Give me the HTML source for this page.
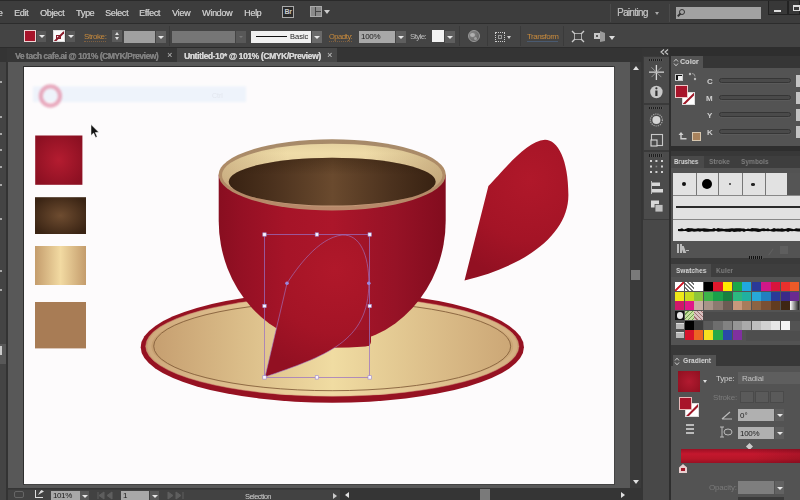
<!DOCTYPE html>
<html><head><meta charset="utf-8">
<style>
*{margin:0;padding:0;box-sizing:border-box;-webkit-font-smoothing:antialiased}
html,body{width:800px;height:500px;overflow:hidden;background:#353535;font-family:"Liberation Sans",sans-serif}
.a{position:absolute}
span,.t,.tx,.lbl,.wl{will-change:transform}
.t{position:absolute;white-space:nowrap;line-height:10px;text-shadow:0.25px 0 0 currentColor}
#menu{left:0;top:0;width:800px;height:23.5px;background:#3d3d3d;border-top:1px solid #2a2a2a;border-bottom:1px solid #2c2c2c}
#menu .t{top:7px;font-size:9px;color:#c4c4c4;letter-spacing:-0.3px}
#ctrl{left:0;top:23.5px;width:800px;height:24px;background:#444444;border-bottom:1px solid #2c2c2c}
.btn{position:absolute;background:#575757}
.btn:after{content:"";position:absolute;left:50%;top:50%;margin-left:-3px;margin-top:-1px;border-left:3px solid transparent;border-right:3px solid transparent;border-top:3px solid #e8e8e8}
.lbl{position:absolute;font-size:8px;color:#c88a3c;letter-spacing:-0.2px;line-height:9px}
.wl{position:absolute;font-size:8px;color:#c8c8c8;letter-spacing:-0.2px;line-height:9px}
#tabs{left:0;top:47.5px;width:642px;height:14.5px;background:#343434}
#canvas{left:8px;top:62px;width:622px;height:426px;background:#585858}
#artboard{left:24px;top:67px;width:590px;height:417px;background:#fdfbfc;box-shadow:-1px -1px 0 0 #2e2e2e,1px 1px 0 0 #444,1px -1px 0 0 #3a3a3a,-1px 1px 0 0 #3a3a3a}
#lstrip{left:0;top:62px;width:7px;height:438px;background:#434343}
#status{left:0;top:488.5px;width:630px;height:11.5px;background:#424242;border-top:1px solid #3a3a3a}
#vscroll{left:630px;top:62px;width:11px;height:426px;background:#3a3a3a}
#tools{left:643px;top:62px;width:26px;height:438px;background:#484848}
#panels{left:669px;top:47px;width:131px;height:453px;background:#2e2e2e}
.ph{position:absolute;left:671px;width:129px;height:12px;background:#363636}
.ptab{position:absolute;height:12px;background:#535353;font-size:8.5px;font-weight:bold;color:#d8d8d8;line-height:12px;padding-left:3px;letter-spacing:-0.2px}
.ptab2{position:absolute;height:12px;font-size:8.5px;font-weight:bold;color:#8a8a8a;line-height:12px;letter-spacing:-0.2px}
.pb{position:absolute;left:671px;width:129px;background:#535353}
.tx{position:absolute;white-space:nowrap;font-size:8px;font-weight:bold;line-height:10px;transform-origin:0 50%;transform:scaleX(0.82)}
.sw{position:absolute;width:9.5px;height:9.5px}
</style></head><body><div id="root" style="position:absolute;left:0;top:0;width:800px;height:500px;overflow:hidden">
<div class="a" id="menu">
 <span class="t" style="left:-4px">le</span>
 <span class="t" style="left:14px">Edit</span>
 <span class="t" style="left:40px">Object</span>
 <span class="t" style="left:76px">Type</span>
 <span class="t" style="left:105px">Select</span>
 <span class="t" style="left:139px">Effect</span>
 <span class="t" style="left:172px">View</span>
 <span class="t" style="left:202px">Window</span>
 <span class="t" style="left:244px">Help</span>
 <div class="a" style="left:282px;top:5px;width:12px;height:12px;border:1px solid #aaa;background:#2a2a2a;font-size:7px;font-weight:bold;color:#ccc;line-height:10px;text-align:center;letter-spacing:-0.5px">Br</div>
 <div class="a" style="left:310px;top:5px;width:12px;height:11px;background:#8a8a8a;border:1px solid #aaa"></div>
 <div class="a" style="left:315px;top:6px;width:1px;height:9px;background:#444"></div>
 <div class="a" style="left:316px;top:10px;width:5px;height:1px;background:#444"></div>
 <div class="a" style="left:324px;top:9px;border-left:3px solid transparent;border-right:3px solid transparent;border-top:4px solid #ccc"></div>
 <div class="a" style="left:610px;top:3px;width:1px;height:18px;background:#4a4a4a"></div>
 <span class="t" style="left:617px;top:7px;font-size:10px;color:#b8b8b8;letter-spacing:-0.7px">Painting</span>
 <div class="a" style="left:655px;top:11px;border-left:2px solid transparent;border-right:2px solid transparent;border-top:3px solid #aaa"></div>
 <div class="a" style="left:669px;top:3px;width:1px;height:18px;background:#4a4a4a"></div>
 <div class="a" style="left:676px;top:6px;width:85px;height:12px;background:#a2a2a2"></div>
 <div class="a" style="left:679px;top:8px;width:6px;height:6px;border:1px solid #333;border-radius:50%"></div>
 <div class="a" style="left:677px;top:13px;width:4px;height:1.5px;background:#333;transform:rotate(-45deg)"></div>
 <div class="a" style="left:768px;top:0px;width:20px;height:14px;background:#383838;border:1px solid #222;border-top:none"></div>
 <div class="a" style="left:774px;top:8.5px;width:7px;height:2px;background:#ddd"></div>
 <div class="a" style="left:788px;top:0px;width:12px;height:14px;background:#383838;border:1px solid #222;border-top:none"></div>
 <div class="a" style="left:793px;top:4px;width:7px;height:6px;border:1px solid #ddd;border-top-width:2px"></div>
</div>

<div class="a" id="ctrl">
 <div class="a" style="left:24px;top:6.5px;width:12px;height:12px;background:#a8142a;border:1px solid #f0d4d4"></div>
 <div class="btn" style="left:37px;top:7px;width:9px;height:11px"></div>
 <div class="a" style="left:53px;top:6.5px;width:12px;height:12px;background:#fafafa;border:1px solid #ddd;overflow:hidden">
   <div class="a" style="left:-2px;top:4.5px;width:14px;height:1.5px;background:#8a1a2a;transform:rotate(-45deg)"></div>
   <div class="a" style="left:2px;top:4px;width:5px;height:4px;border:1px solid #8a1a2a"></div>
 </div>
 <div class="btn" style="left:66px;top:7px;width:9px;height:11px"></div>
 <span class="lbl" style="left:84px;top:8px;border-bottom:1px dotted #806040;letter-spacing:-0.41px">Stroke:</span>
 <div class="a" style="left:112px;top:6.5px;width:10px;height:12px;background:#5a5a5a"></div>
 <div class="a" style="left:114.5px;top:8px;border-left:2.5px solid transparent;border-right:2.5px solid transparent;border-bottom:3px solid #ddd"></div>
 <div class="a" style="left:114.5px;top:13.5px;border-left:2.5px solid transparent;border-right:2.5px solid transparent;border-top:3px solid #ddd"></div>
 <div class="a" style="left:124px;top:7px;width:31px;height:12px;background:#a0a0a0"></div>
 <div class="btn" style="left:156px;top:7px;width:10px;height:12px;background:#606060"></div>
 <div class="a" style="left:169px;top:2px;width:1px;height:20px;background:#3a3a3a"></div>
 <div class="a" style="left:172px;top:7px;width:63px;height:12px;background:#767676"></div>
 <div class="a" style="left:236px;top:7px;width:10px;height:12px;background:#585858"></div>
 <div class="a" style="left:239px;top:12px;border-left:2px solid transparent;border-right:2px solid transparent;border-top:2px solid #777"></div>
 <div class="a" style="left:251px;top:7px;width:60px;height:12px;background:#f0f0f0"></div>
 <div class="a" style="left:256px;top:12px;width:31px;height:1.5px;background:#111"></div>
 <span class="a" style="left:290px;top:8.5px;font-size:7.5px;color:#222;line-height:9px">Basic</span>
 <div class="btn" style="left:312px;top:7px;width:10px;height:12px;background:#6a6a6a"></div>
 <span class="lbl" style="left:329px;top:8px;font-size:7.5px;letter-spacing:-0.55px;border-bottom:1px dotted #806040">Opacity:</span>
 <div class="a" style="left:359px;top:7px;width:36px;height:12px;background:#a8a8a8"></div>
 <span class="a" style="left:361px;top:8.5px;font-size:8px;color:#222;line-height:9px;letter-spacing:-0.3px">100%</span>
 <div class="btn" style="left:396px;top:7px;width:10px;height:12px;background:#5e5e5e"></div>
 <span class="wl" style="left:410px;top:8px;color:#bdbdbd;letter-spacing:-0.67px">Style:</span>
 <div class="a" style="left:432px;top:6.5px;width:12px;height:12px;background:#f2f2f2"></div>
 <div class="btn" style="left:445px;top:7px;width:10px;height:12px;background:#5e5e5e"></div>
 <div class="a" style="left:459px;top:2px;width:1px;height:20px;background:#3a3a3a"></div>
 <div class="a" style="left:467.5px;top:6.5px;width:12px;height:12px;border-radius:50%;background:radial-gradient(circle at 35% 35%,#8a8a8a,#5a5a5a);border:1px solid #9a9a9a"></div><div class="a" style="left:470px;top:9px;width:5px;height:4px;border-radius:50%;background:#b0b0b0"></div><div class="a" style="left:474px;top:13px;width:3px;height:3px;border-radius:50%;background:#a0a0a0"></div>
 <div class="a" style="left:487px;top:2px;width:1px;height:20px;background:#3a3a3a"></div>
 <div class="a" style="left:495px;top:8px;width:10px;height:10px;border:1px dotted #ccc"></div>
 <div class="a" style="left:498px;top:11px;width:4px;height:4px;border:1px solid #999"></div>
 <div class="a" style="left:507px;top:12px;border-left:2.5px solid transparent;border-right:2.5px solid transparent;border-top:3px solid #ccc"></div>
 <div class="a" style="left:520px;top:2px;width:1px;height:20px;background:#3a3a3a"></div>
 <span class="lbl" style="left:527px;top:8px;border-bottom:1px solid #4a5a70;letter-spacing:-0.52px">Transform</span>
 <div class="a" style="left:563px;top:2px;width:1px;height:20px;background:#3a3a3a"></div>
 <svg class="a" style="left:571px;top:6px" width="14" height="13"><rect x="3.5" y="3.5" width="7" height="6" fill="none" stroke="#aaa" stroke-width="1"/><path d="M1,1 L4,4 M13,1 L10,4 M1,12 L4,9 M13,12 L10,9" stroke="#ccc" stroke-width="1.4"/></svg>
 <svg class="a" style="left:593px;top:6px" width="14" height="13"><rect x="1" y="3" width="6" height="6" fill="#c8c8c8"/><path d="M7,1 L12,3 L12,11 L7,12 Z" fill="#9a9a9a"/><rect x="3" y="5" width="2" height="2" fill="#555"/></svg>
 <div class="a" style="left:609px;top:12px;border-left:3px solid transparent;border-right:3px solid transparent;border-top:4px solid #ddd"></div>
</div>

<div class="a" id="tabs">
 <div class="a" style="left:7px;top:0;width:170px;height:15px;background:#363636"></div>
 <span class="t" style="left:15px;top:3px;font-size:8.5px;font-weight:bold;color:#808080;letter-spacing:-0.48px">Ve tach cafe.ai @ 101% (CMYK/Preview)</span>
 <span class="t" style="left:167px;top:2px;font-size:9px;color:#9a9a9a">×</span>
 <div class="a" style="left:177px;top:0;width:160px;height:15px;background:#474747"></div>
 <span class="t" style="left:183.5px;top:3px;font-size:8.5px;font-weight:bold;color:#d4d4d4;letter-spacing:-0.38px">Untitled-10* @ 101% (CMYK/Preview)</span>
 <span class="t" style="left:327px;top:2px;font-size:9px;color:#a8a8a8">×</span>
</div>

<div class="a" id="canvas"></div>
<div class="a" id="artboard"></div>
<div class="a" id="status"></div>
<div class="a" style="left:0px;top:62px;width:7px;height:438px;background:#444"></div>
<div class="a" style="left:6px;top:62px;width:2px;height:438px;background:#333"></div>
<div class="a" style="left:0px;top:81px;width:2px;height:1.5px;background:#a8a8a8"></div>
<div class="a" style="left:0px;top:116px;width:2px;height:1.5px;background:#a8a8a8"></div>
<div class="a" style="left:0px;top:133px;width:2px;height:1.5px;background:#a8a8a8"></div>
<div class="a" style="left:0px;top:149px;width:2px;height:1.5px;background:#a8a8a8"></div>
<div class="a" style="left:0px;top:166px;width:2px;height:1.5px;background:#a8a8a8"></div>
<div class="a" style="left:0px;top:184px;width:2px;height:1.5px;background:#a8a8a8"></div>
<div class="a" style="left:0px;top:218px;width:2px;height:1.5px;background:#a8a8a8"></div>
<div class="a" style="left:0px;top:270px;width:2px;height:1.5px;background:#a8a8a8"></div>
<div class="a" style="left:0px;top:289px;width:2px;height:1.5px;background:#a8a8a8"></div>
<div class="a" style="left:0px;top:344px;width:6px;height:20px;background:#585858"></div>
<div class="a" style="left:0px;top:346px;width:2px;height:9px;background:#ccc"></div>
<div class="a" style="left:8px;top:488.5px;width:622px;height:11.5px;background:#424242;border-top:1px solid #3a3a3a"></div>
<div class="a" style="left:14px;top:491px;width:10px;height:7px;border:1px solid #666;border-radius:2px"></div>
<div class="a" style="left:35px;top:490px;width:8px;height:8px;border:1.2px solid #ddd;border-right:none;border-top:none"></div>
<div class="a" style="left:38px;top:490px;width:6px;height:5px;background:#ddd;clip-path:polygon(0 100%,40% 20%,60% 0,100% 30%,70% 50%)"></div>
<div class="a" style="left:51px;top:491px;width:29px;height:9px;background:#a8a8a8"></div>
<span class="a" style="left:53px;top:491px;font-size:8px;color:#1a1a1a;line-height:9px;letter-spacing:-0.4px">101%</span>
<div class="btn" style="left:80px;top:491px;width:9px;height:9px;background:#595959"></div>
<svg class="a" style="left:97px;top:491px" width="20" height="9"><path d="M1,1 V8 M7,1 L2,4.5 L7,8 Z M15,1 L10,4.5 L15,8 Z" stroke="#5e5e5e" fill="#5e5e5e" stroke-width="1"/></svg>
<div class="a" style="left:121px;top:491px;width:28px;height:9px;background:#a8a8a8"></div>
<span class="a" style="left:123px;top:491px;font-size:8px;color:#1a1a1a;line-height:9px">1</span>
<div class="btn" style="left:150px;top:491px;width:9px;height:9px;background:#595959"></div>
<svg class="a" style="left:166px;top:491px" width="20" height="9"><path d="M2,1 L7,4.5 L2,8 Z M10,1 L15,4.5 L10,8 Z M17,1 V8" stroke="#5e5e5e" fill="#5e5e5e" stroke-width="1"/></svg>
<span class="a" style="left:245px;top:491.5px;font-size:7.5px;color:#cfcfcf;line-height:9px;letter-spacing:-0.54px">Selection</span>
<div class="a" style="left:333px;top:492.5px;border-top:3px solid transparent;border-bottom:3px solid transparent;border-left:4px solid #ccc"></div>
<div class="a" style="left:340px;top:489px;width:290px;height:11px;background:#353535"></div>
<div class="a" style="left:345px;top:492px;border-top:3.5px solid transparent;border-bottom:3.5px solid transparent;border-right:4px solid #e0e0e0"></div>
<div class="a" style="left:480px;top:489px;width:10px;height:11px;background:#7a7a7a"></div>
<div class="a" style="left:621px;top:492px;border-top:3.5px solid transparent;border-bottom:3.5px solid transparent;border-left:4px solid #e0e0e0"></div>


<div class="a" id="tools"></div>
<div class="a" style="left:630px;top:61.5px;width:11px;height:426.5px;background:#3a3a3a"></div>
<div class="a" style="left:633px;top:65.5px;border-left:3.5px solid transparent;border-right:3.5px solid transparent;border-bottom:4px solid #e0e0e0"></div>
<div class="a" style="left:631px;top:270px;width:9px;height:10px;background:#7a7a7a"></div>
<div class="a" style="left:633px;top:480px;border-left:3.5px solid transparent;border-right:3.5px solid transparent;border-top:4px solid #e0e0e0"></div>
<div class="a" style="left:642.5px;top:55.5px;width:27px;height:48px;background:#4b4b4b;border:1px solid #3a3a3a"></div>
<div class="a" style="left:642.5px;top:103.5px;width:27px;height:47.5px;background:#4b4b4b;border:1px solid #3a3a3a"></div>
<div class="a" style="left:642.5px;top:151px;width:27px;height:69px;background:#4b4b4b;border:1px solid #3a3a3a"></div>
<div class="a" style="left:649px;top:58.5px;width:14px;height:2.5px;background:repeating-linear-gradient(90deg,#1e1e1e 0 1px,#555 1px 2px)"></div>
<div class="a" style="left:649px;top:106.5px;width:14px;height:2.5px;background:repeating-linear-gradient(90deg,#1e1e1e 0 1px,#555 1px 2px)"></div>
<div class="a" style="left:649px;top:154px;width:14px;height:2.5px;background:repeating-linear-gradient(90deg,#1e1e1e 0 1px,#555 1px 2px)"></div>
<svg class="a" style="left:643px;top:62px" width="27" height="160" viewBox="643 62 27 160">
 <g stroke="#d8d8d8" fill="none">
  <path d="M656.4,65 V80 M649,72.2 H664" stroke-width="1.3"/>
  <path d="M651.5,67.3 L661.3,77.1 M661.3,67.3 L651.5,77.1" stroke-width="0.8" stroke="#aaa"/>
 </g>
 <circle cx="656.4" cy="92" r="6.2" fill="#c8c8c8"/>
 <rect x="655.3" y="90.5" width="2.2" height="5.5" fill="#333"/>
 <circle cx="656.4" cy="88.3" r="1.1" fill="#333"/>
 <circle cx="656.4" cy="120" r="6" fill="none" stroke="#a8a8a8" stroke-width="1.2" stroke-dasharray="1.2 1"/>
 <circle cx="656.4" cy="120" r="4" fill="#d4d4d4"/>
 <rect x="651.5" y="134.5" width="11" height="11" fill="none" stroke="#c8c8c8" stroke-width="1.1"/>
 <rect x="651" y="140" width="6" height="6" fill="#4b4b4b" stroke="#d8d8d8" stroke-width="1.1"/>
 <g fill="#d0d0d0">
  <rect x="650" y="160" width="2" height="2"/><rect x="655.4" y="160" width="2" height="2"/><rect x="661" y="160" width="2" height="2"/>
  <rect x="650" y="165.5" width="2" height="2"/><rect x="661" y="165.5" width="2" height="2"/>
  <rect x="650" y="171" width="2" height="2"/><rect x="655.4" y="171" width="2" height="2"/><rect x="661" y="171" width="2" height="2"/>
  <rect x="655.6" y="165.7" width="1.6" height="1.6" fill="#888"/>
 </g>
 <rect x="651" y="181" width="1" height="13" fill="#bbb"/>
 <rect x="652" y="182.5" width="8" height="3.5" fill="#d8d8d8"/>
 <rect x="652" y="189" width="11" height="3.5" fill="#d8d8d8"/>
 <rect x="651" y="200.5" width="8" height="7" fill="#d8d8d8"/>
 <rect x="655" y="204.5" width="8" height="7.5" fill="#c0c0c0" stroke="#4b4b4b" stroke-width="0.8"/>
</svg>

<div class="a" id="panels"></div>
<!-- collapse arrows -->
<svg class="a" style="left:660px;top:49px" width="10" height="6"><path d="M4,0.5 L1,3 L4,5.5 M8,0.5 L5,3 L8,5.5" stroke="#c8c8c8" fill="none" stroke-width="1.1"/></svg>
<!-- COLOR panel -->
<div class="ph" style="top:56px"></div>
<div class="ptab" style="left:671px;top:56px;width:32px"></div><span class="tx" style="left:680px;top:57px;color:#d8d8d8;transform:scaleX(0.9)">Color</span><svg class="a" style="left:673px;top:58px" width="6" height="9"><path d="M1,3.5 L3,1.2 L5,3.5 M1,5.5 L3,7.8 L5,5.5" stroke="#ccc" stroke-width="1" fill="none"/></svg>
<div class="pb" style="top:68px;height:78px"></div>
<div class="a" style="left:675px;top:74px;width:8px;height:7px;background:#111;border:1px solid #ccc"></div>
<div class="a" style="left:678px;top:76px;width:4px;height:4px;background:#eee"></div>
<svg class="a" style="left:688px;top:72px" width="9" height="9"><circle cx="2" cy="2" r="1.2" fill="#bbb"/><circle cx="7" cy="7" r="1.2" fill="#bbb"/><path d="M4,1.5 Q7,1.5 7,4.5" stroke="#aaa" fill="none" stroke-width="0.8"/></svg>
<div class="a" style="left:682px;top:91.5px;width:13px;height:13.5px;background:#fff;border:1px solid #ddd;overflow:hidden">
 <div class="a" style="left:-3px;top:5px;width:18px;height:2px;background:#a01828;transform:rotate(-45deg)"></div>
</div>
<div class="a" style="left:675px;top:85px;width:13px;height:12.5px;background:#a8142a;border:1px solid #f0c8c8"></div>
<span class="wl" style="left:707px;top:77px;font-weight:bold;color:#cfcfcf">C</span>
<span class="wl" style="left:706px;top:94px;font-weight:bold;color:#cfcfcf">M</span>
<span class="wl" style="left:707px;top:111px;font-weight:bold;color:#cfcfcf">Y</span>
<span class="wl" style="left:707px;top:128px;font-weight:bold;color:#cfcfcf">K</span>
<div class="a" style="left:719px;top:77.8px;width:72px;height:5px;background:#4a4a4a;border:1px solid #363636;border-radius:2.5px;box-shadow:0 1px 0 #5a5a5a"></div>
<div class="a" style="left:719px;top:95px;width:72px;height:5px;background:#4a4a4a;border:1px solid #363636;border-radius:2.5px;box-shadow:0 1px 0 #5a5a5a"></div>
<div class="a" style="left:719px;top:112px;width:72px;height:5px;background:#4a4a4a;border:1px solid #363636;border-radius:2.5px;box-shadow:0 1px 0 #5a5a5a"></div>
<div class="a" style="left:719px;top:129px;width:72px;height:5px;background:#4a4a4a;border:1px solid #363636;border-radius:2.5px;box-shadow:0 1px 0 #5a5a5a"></div>
<div class="a" style="left:796px;top:75px;width:4px;height:12px;background:#c4c4c4"></div>
<div class="a" style="left:796px;top:92px;width:4px;height:12px;background:#c4c4c4"></div>
<div class="a" style="left:796px;top:109px;width:4px;height:12px;background:#c4c4c4"></div>
<div class="a" style="left:796px;top:126px;width:4px;height:12px;background:#c4c4c4"></div>
<svg class="a" style="left:678px;top:131px" width="10" height="11"><path d="M3,1 L0.5,4 L2.3,4 L2.3,8.5 L8.5,8.5 L8.5,7 L3.7,7 L3.7,4 L5.5,4 Z" fill="#d0d0d0"/></svg>
<div class="a" style="left:692px;top:131.5px;width:9px;height:9.5px;background:#a8825c;border:1px solid #d8c8b0"></div>
<!-- BRUSHES panel -->
<div class="a" style="left:671px;top:151px;width:129px;height:5px;background:#383838"></div>
<div class="ph" style="top:156px;background:#3e3e3e"></div>
<div class="ptab" style="left:671px;top:156px;width:33px;background:#4a4a4a"></div><span class="tx" style="left:673.5px;top:157px;color:#d4d4d4;transform:scaleX(0.76)">Brushes</span>
<span class="tx" style="left:708.5px;top:157px;color:#7e7e7e;transform:scaleX(0.835)">Stroke</span>
<span class="tx" style="left:740.5px;top:157px;color:#7e7e7e;transform:scaleX(0.825)">Symbols</span>
<div class="pb" style="top:168px;height:90px"></div>
<div class="a" style="left:673px;top:172.5px;width:127px;height:68.5px;background:#e2e2e2"></div>
<div class="a" style="left:787px;top:172.5px;width:13px;height:23px;background:#555"></div>
<div class="a" style="left:695.5px;top:172.5px;width:1px;height:23px;background:#777"></div>
<div class="a" style="left:718.3px;top:172.5px;width:1px;height:23px;background:#777"></div>
<div class="a" style="left:741.5px;top:172.5px;width:1px;height:23px;background:#777"></div>
<div class="a" style="left:764.5px;top:172.5px;width:1px;height:23px;background:#777"></div>
<div class="a" style="left:673px;top:195.4px;width:127px;height:1px;background:#888"></div>
<div class="a" style="left:673px;top:218.8px;width:127px;height:1px;background:#888"></div>
<div class="a" style="left:682px;top:182px;width:4px;height:4px;border-radius:50%;background:#111"></div>
<div class="a" style="left:702px;top:179px;width:10px;height:10px;border-radius:50%;background:#000"></div>
<div class="a" style="left:729px;top:183px;width:2px;height:2px;border-radius:50%;background:#333"></div>
<div class="a" style="left:751px;top:183px;width:3.5px;height:2.5px;border-radius:50%;background:#222"></div>
<div class="a" style="left:676px;top:206px;width:124px;height:1.6px;background:#2a2a2a"></div>
<svg class="a" style="left:673px;top:224px" width="127" height="12"><path d="M5.0,5.0 L7.0,4.9 L9.0,4.3 L11.0,5.4 L13.0,4.8 L15.0,4.1 L17.0,4.3 L19.0,4.3 L21.0,4.7 L23.0,4.8 L25.0,4.2 L27.0,4.4 L29.0,4.6 L31.0,4.2 L33.0,4.6 L35.0,4.7 L37.0,4.9 L39.0,5.0 L41.0,4.0 L43.0,4.9 L45.0,4.1 L47.0,4.4 L49.0,4.6 L51.0,4.9 L53.0,4.8 L55.0,4.7 L57.0,4.6 L59.0,4.3 L61.0,4.5 L63.0,4.2 L65.0,4.2 L67.0,4.3 L69.0,4.6 L71.0,4.6 L73.0,5.3 L75.0,4.5 L77.0,5.0 L79.0,4.0 L81.0,4.3 L83.0,4.3 L85.0,4.5 L87.0,4.9 L89.0,4.6 L91.0,4.3 L93.0,4.9 L95.0,4.3 L97.0,5.4 L99.0,5.1 L101.0,4.1 L103.0,4.7 L105.0,4.5 L107.0,4.7 L109.0,4.2 L111.0,4.9 L113.0,4.8 L115.0,4.1 L117.0,4.3 L119.0,4.8 L121.0,5.2 L123.0,4.2 L125.0,4.5 L127.0,4.4 L127.0,7.5 L125.0,7.5 L123.0,7.2 L121.0,6.9 L119.0,7.3 L117.0,7.1 L115.0,7.9 L113.0,6.9 L111.0,7.4 L109.0,7.8 L107.0,7.5 L105.0,7.6 L103.0,7.3 L101.0,7.7 L99.0,7.4 L97.0,7.1 L95.0,7.3 L93.0,7.0 L91.0,7.2 L89.0,6.9 L87.0,7.7 L85.0,8.1 L83.0,7.5 L81.0,7.2 L79.0,7.5 L77.0,7.3 L75.0,7.0 L73.0,7.1 L71.0,8.0 L69.0,6.9 L67.0,7.8 L65.0,7.4 L63.0,7.8 L61.0,8.0 L59.0,7.3 L57.0,8.0 L55.0,7.8 L53.0,7.7 L51.0,7.2 L49.0,7.3 L47.0,7.4 L45.0,7.8 L43.0,6.8 L41.0,7.5 L39.0,7.6 L37.0,7.4 L35.0,7.8 L33.0,7.8 L31.0,7.7 L29.0,6.9 L27.0,7.7 L25.0,7.3 L23.0,7.5 L21.0,7.7 L19.0,7.3 L17.0,7.7 L15.0,7.9 L13.0,6.9 L11.0,7.0 L9.0,7.2 L7.0,7.3 L5.0,7.1 Z" fill="#0a0a0a"/></svg>
<div class="a" style="left:677px;top:244px;width:2px;height:9px;background:#bbb"></div>
<div class="a" style="left:680px;top:244px;width:2px;height:9px;background:#bbb"></div>
<div class="a" style="left:682px;top:246px;width:3px;height:7px;background:#bbb;transform:skewX(20deg)"></div>
<div class="a" style="left:686px;top:250px;width:3px;height:1px;background:#bbb"></div>
<div class="a" style="left:764px;top:246px;width:8px;height:8px;border-right:1.5px solid #606060;transform:rotate(35deg)"></div>
<div class="a" style="left:780px;top:246px;width:8px;height:8px;background:#5e5e5e"></div>
<div class="a" style="left:671px;top:258px;width:129px;height:6px;background:#3a3a3a"></div>
<div class="a" style="left:749px;top:256px;width:14px;height:3px;background:repeating-linear-gradient(90deg,#111 0 1px,#555 1px 2px)"></div>
<!-- SWATCHES panel -->
<div class="ph" style="top:264px;height:13px;background:#3e3e3e"></div>
<div class="ptab" style="left:671px;top:264px;width:40px;height:13px;background:#4d4d4d"></div><span class="tx" style="left:675.5px;top:265.5px;color:#d4d4d4;transform:scaleX(0.824)">Swatches</span>
<span class="tx" style="left:716px;top:265.5px;color:#7e7e7e;transform:scaleX(0.831)">Kuler</span>
<div class="pb" style="top:277px;height:68px"></div>
<div class="a" style="left:703px;top:311.5px;width:97px;height:9.7px;background:#4a4a4a"></div>
<div class="a" style="left:746px;top:330.9px;width:54px;height:9.7px;background:#4e4e4e"></div>
<div class="sw" style="left:675.0px;top:281.8px;width:9.2px;height:9.3px;background:linear-gradient(135deg,#fff 42%,#d01828 45%,#d01828 55%,#fff 58%)"></div>
<div class="sw" style="left:684.6px;top:281.8px;width:9.2px;height:9.3px;background:repeating-linear-gradient(45deg,#fff 0 1.5px,#777 1.5px 3px)"></div>
<div class="sw" style="left:694.2px;top:281.8px;width:9.2px;height:9.3px;background:#ffffff"></div>
<div class="sw" style="left:703.8px;top:281.8px;width:9.2px;height:9.3px;background:#000000"></div>
<div class="sw" style="left:713.4px;top:281.8px;width:9.2px;height:9.3px;background:#e0182c"></div>
<div class="sw" style="left:723.0px;top:281.8px;width:9.2px;height:9.3px;background:#ffec00"></div>
<div class="sw" style="left:732.6px;top:281.8px;width:9.2px;height:9.3px;background:#1aa84a"></div>
<div class="sw" style="left:742.2px;top:281.8px;width:9.2px;height:9.3px;background:#20a8e0"></div>
<div class="sw" style="left:751.8px;top:281.8px;width:9.2px;height:9.3px;background:#2a3a98"></div>
<div class="sw" style="left:761.4px;top:281.8px;width:9.2px;height:9.3px;background:#d01888"></div>
<div class="sw" style="left:771.0px;top:281.8px;width:9.2px;height:9.3px;background:#d8143c"></div>
<div class="sw" style="left:780.6px;top:281.8px;width:9.2px;height:9.3px;background:#e8302c"></div>
<div class="sw" style="left:790.2px;top:281.8px;width:9.2px;height:9.3px;background:#ec5a28"></div>
<div class="sw" style="left:675.0px;top:291.5px;width:9.2px;height:9.3px;background:#f0e818"></div>
<div class="sw" style="left:684.6px;top:291.5px;width:9.2px;height:9.3px;background:#c8dc20"></div>
<div class="sw" style="left:694.2px;top:291.5px;width:9.2px;height:9.3px;background:#8cc63c"></div>
<div class="sw" style="left:703.8px;top:291.5px;width:9.2px;height:9.3px;background:#3cb44a"></div>
<div class="sw" style="left:713.4px;top:291.5px;width:9.2px;height:9.3px;background:#1aa04a"></div>
<div class="sw" style="left:723.0px;top:291.5px;width:9.2px;height:9.3px;background:#178040"></div>
<div class="sw" style="left:732.6px;top:291.5px;width:9.2px;height:9.3px;background:#2cb880"></div>
<div class="sw" style="left:742.2px;top:291.5px;width:9.2px;height:9.3px;background:#20b0a0"></div>
<div class="sw" style="left:751.8px;top:291.5px;width:9.2px;height:9.3px;background:#28a8d8"></div>
<div class="sw" style="left:761.4px;top:291.5px;width:9.2px;height:9.3px;background:#2080c0"></div>
<div class="sw" style="left:771.0px;top:291.5px;width:9.2px;height:9.3px;background:#2a3a98"></div>
<div class="sw" style="left:780.6px;top:291.5px;width:9.2px;height:9.3px;background:#3a2a88"></div>
<div class="sw" style="left:790.2px;top:291.5px;width:9.2px;height:9.3px;background:#6a2a90"></div>
<div class="sw" style="left:675.0px;top:301.2px;width:9.2px;height:9.3px;background:#d0186a"></div>
<div class="sw" style="left:684.6px;top:301.2px;width:9.2px;height:9.3px;background:#e01888"></div>
<div class="sw" style="left:694.2px;top:301.2px;width:9.2px;height:9.3px;background:#c8b0a4"></div>
<div class="sw" style="left:703.8px;top:301.2px;width:9.2px;height:9.3px;background:#a89488"></div>
<div class="sw" style="left:713.4px;top:301.2px;width:9.2px;height:9.3px;background:#8c7a70"></div>
<div class="sw" style="left:723.0px;top:301.2px;width:9.2px;height:9.3px;background:#6c5c54"></div>
<div class="sw" style="left:732.6px;top:301.2px;width:9.2px;height:9.3px;background:#c8987c"></div>
<div class="sw" style="left:742.2px;top:301.2px;width:9.2px;height:9.3px;background:#a87c5c"></div>
<div class="sw" style="left:751.8px;top:301.2px;width:9.2px;height:9.3px;background:#8c6444"></div>
<div class="sw" style="left:761.4px;top:301.2px;width:9.2px;height:9.3px;background:#7a5034"></div>
<div class="sw" style="left:771.0px;top:301.2px;width:9.2px;height:9.3px;background:#623c20"></div>
<div class="sw" style="left:780.6px;top:301.2px;width:9.2px;height:9.3px;background:#3e2614"></div>
<div class="sw" style="left:790.2px;top:301.2px;width:9.2px;height:9.3px;background:linear-gradient(90deg,#fff,#222)"></div>
<div class="sw" style="left:675.0px;top:310.9px;width:9.2px;height:9.3px;background:#111"><div class="a" style="left:1.5px;top:1.5px;width:6.5px;height:6.5px;border-radius:50%;background:#e8e8e8"></div></div>
<div class="sw" style="left:684.6px;top:310.9px;width:9.2px;height:9.3px;background:repeating-linear-gradient(135deg,#c8e0a0 0 2px,#70a050 2px 3px)"></div>
<div class="sw" style="left:694.2px;top:310.9px;width:9.2px;height:9.3px;background:repeating-linear-gradient(45deg,#d8c0c0 0 2px,#a07070 2px 3px)"></div>
<div class="sw" style="left:675.0px;top:320.6px;width:9.2px;height:9.3px;"><div class="a" style="left:1px;top:2px;width:8px;height:6px;background:#b8b8b8;border-top:1px solid #ddd"></div></div>
<div class="sw" style="left:684.6px;top:320.6px;width:9.2px;height:9.3px;background:#000000"></div>
<div class="sw" style="left:694.2px;top:320.6px;width:9.2px;height:9.3px;background:#3c3c3c"></div>
<div class="sw" style="left:703.8px;top:320.6px;width:9.2px;height:9.3px;background:#5a5a5a"></div>
<div class="sw" style="left:713.4px;top:320.6px;width:9.2px;height:9.3px;background:#6e6e6e"></div>
<div class="sw" style="left:723.0px;top:320.6px;width:9.2px;height:9.3px;background:#828282"></div>
<div class="sw" style="left:732.6px;top:320.6px;width:9.2px;height:9.3px;background:#969696"></div>
<div class="sw" style="left:742.2px;top:320.6px;width:9.2px;height:9.3px;background:#aaaaaa"></div>
<div class="sw" style="left:751.8px;top:320.6px;width:9.2px;height:9.3px;background:#bebebe"></div>
<div class="sw" style="left:761.4px;top:320.6px;width:9.2px;height:9.3px;background:#d2d2d2"></div>
<div class="sw" style="left:771.0px;top:320.6px;width:9.2px;height:9.3px;background:#e6e6e6"></div>
<div class="sw" style="left:780.6px;top:320.6px;width:9.2px;height:9.3px;background:#f4f4f4"></div>
<div class="sw" style="left:675.0px;top:330.3px;width:9.2px;height:9.3px;"><div class="a" style="left:1px;top:2px;width:8px;height:6px;background:#b8b8b8;border-top:1px solid #ddd"></div></div>
<div class="sw" style="left:684.6px;top:330.3px;width:9.2px;height:9.3px;background:#d8142c"></div>
<div class="sw" style="left:694.2px;top:330.3px;width:9.2px;height:9.3px;background:#ec6424"></div>
<div class="sw" style="left:703.8px;top:330.3px;width:9.2px;height:9.3px;background:#f8e020"></div>
<div class="sw" style="left:713.4px;top:330.3px;width:9.2px;height:9.3px;background:#28a848"></div>
<div class="sw" style="left:723.0px;top:330.3px;width:9.2px;height:9.3px;background:#2a4aa8"></div>
<div class="sw" style="left:732.6px;top:330.3px;width:9.2px;height:9.3px;background:#8030a0"></div>
<div class="a" style="left:671px;top:345px;width:129px;height:10px;background:#383838"></div>
<!-- GRADIENT panel -->
<div class="ph" style="top:355px;height:11px;background:#383838"></div>
<div class="ptab" style="left:673px;top:355px;width:43px;height:11px"></div><span class="tx" style="left:683px;top:355.5px;color:#d8d8d8;transform:scaleX(0.851)">Gradient</span><svg class="a" style="left:674px;top:356.5px" width="6" height="9"><path d="M1,3.5 L3,1.2 L5,3.5 M1,5.5 L3,7.8 L5,5.5" stroke="#ccc" stroke-width="1" fill="none"/></svg>
<div class="pb" style="top:366px;height:134px"></div>
<div class="a" style="left:678px;top:371px;width:22px;height:21px;background:radial-gradient(circle,#b21a30,#8e1020)"></div>
<div class="a" style="left:703px;top:380px;border-left:2px solid transparent;border-right:2px solid transparent;border-top:3px solid #ddd"></div>
<span class="wl" style="left:716px;top:374px;color:#cfcfcf">Type:</span>
<div class="a" style="left:738px;top:372px;width:62px;height:12px;background:#5e5e5e"></div>
<span class="wl" style="left:742px;top:374px;color:#c0c0c0">Radial</span>
<span class="wl" style="left:713px;top:393px;color:#7c7c7c">Stroke:</span>
<div class="a" style="left:740px;top:391px;width:14px;height:12px;background:#5a5a5a;border:1px solid #4a4a4a"></div>
<div class="a" style="left:755px;top:391px;width:14px;height:12px;background:#5a5a5a;border:1px solid #4a4a4a"></div>
<div class="a" style="left:770px;top:391px;width:14px;height:12px;background:#5a5a5a;border:1px solid #4a4a4a"></div>
<div class="a" style="left:685px;top:403px;width:14px;height:14px;background:#fff;border:1px solid #ddd;overflow:hidden">
 <div class="a" style="left:-3px;top:5.5px;width:19px;height:2px;background:#a01828;transform:rotate(-45deg)"></div>
</div>
<div class="a" style="left:679px;top:397px;width:13px;height:13px;background:#a8142a;border:1px solid #e8b8b8"></div>
<div class="a" style="left:686px;top:424px;width:8px;height:2px;background:#bbb"></div>
<div class="a" style="left:686px;top:428px;width:8px;height:2px;background:#bbb"></div>
<div class="a" style="left:686px;top:432px;width:8px;height:2px;background:#bbb"></div>
<svg class="a" style="left:720px;top:408px" width="14" height="30"><path d="M2,11 L10,4 M2,11 L12,11" stroke="#bbb" stroke-width="1.2" fill="none"/><ellipse cx="8" cy="24" rx="4" ry="3" stroke="#bbb" fill="none"/><path d="M2,19 L2,29 M0,19 L4,19 M0,29 L4,29" stroke="#bbb"/></svg>
<div class="a" style="left:738px;top:409px;width:36px;height:12px;background:#b0b0b0"></div>
<span class="a" style="left:740px;top:410.5px;font-size:8px;color:#222;line-height:9px">0°</span>
<div class="btn" style="left:775px;top:409px;width:9px;height:12px;background:#5e5e5e"></div>
<div class="a" style="left:738px;top:427px;width:36px;height:12px;background:#b0b0b0"></div>
<span class="a" style="left:740px;top:428.5px;font-size:8px;color:#222;line-height:9px;letter-spacing:-0.3px">100%</span>
<div class="btn" style="left:775px;top:427px;width:9px;height:12px;background:#5e5e5e"></div>
<div class="a" style="left:746.5px;top:443.5px;width:5px;height:5px;background:#ccc;transform:rotate(45deg)"></div>
<div class="a" style="left:681px;top:449px;width:119px;height:14px;background:linear-gradient(180deg,#9c1024,#c4182e 35%,#b81628 70%,#981024)"></div><div class="a" style="left:681px;top:449px;width:119px;height:14px;background:linear-gradient(90deg,rgba(0,0,0,0),rgba(0,0,0,0) 60%,rgba(40,0,10,.15))"></div>
<div class="a" style="left:679px;top:464px;width:8px;height:9px;background:#e8d0d0;clip-path:polygon(50% 0,100% 40%,100% 100%,0 100%,0 40%)"></div>
<div class="a" style="left:681px;top:468px;width:4px;height:3px;background:#a01828"></div>
<span class="wl" style="left:709px;top:483px;color:#7a7a7a">Opacity:</span>
<div class="a" style="left:738px;top:481px;width:36px;height:13px;background:#7e7e7e"></div>
<div class="btn" style="left:775px;top:481px;width:9px;height:13px;background:#626262"></div>
<div class="a" style="left:738px;top:497px;width:46px;height:3px;background:#3a3a3a"></div>


<svg class="a" style="left:0;top:0" width="800" height="500" viewBox="0 0 800 500">
 <defs>
  <linearGradient id="saucerG" gradientUnits="userSpaceOnUse" x1="145" x2="520" y1="0" y2="0">
   <stop offset="0" stop-color="#c49c6e"/>
   <stop offset="0.5" stop-color="#f0dca2"/>
   <stop offset="1" stop-color="#caa474"/>
  </linearGradient>
  <linearGradient id="cupG" gradientUnits="userSpaceOnUse" x1="218" x2="446" y1="0" y2="0">
   <stop offset="0" stop-color="#880e20"/>
   <stop offset="0.1" stop-color="#941024"/>
   <stop offset="0.3" stop-color="#a61428"/>
   <stop offset="0.5" stop-color="#ac162a"/>
   <stop offset="0.78" stop-color="#961226"/>
   <stop offset="1" stop-color="#820c1e"/>
  </linearGradient>
  <linearGradient id="cupG2" gradientUnits="userSpaceOnUse" x1="218" x2="446" y1="0" y2="0">
   <stop offset="0" stop-color="#8a0e20"/>
   <stop offset="0.45" stop-color="#a41428"/>
   <stop offset="1" stop-color="#820e1e"/>
  </linearGradient>
  <linearGradient id="rimO" gradientUnits="userSpaceOnUse" x1="0" x2="0" y1="139" y2="211">
   <stop offset="0" stop-color="#a68a6a"/>
   <stop offset="0.5" stop-color="#b08c66"/>
   <stop offset="1" stop-color="#b8886a"/>
  </linearGradient>
  <linearGradient id="rimG" gradientUnits="userSpaceOnUse" x1="0" x2="0" y1="143.7" y2="206.5">
   <stop offset="0" stop-color="#e6d2a0"/>
   <stop offset="0.15" stop-color="#efdca8"/>
   <stop offset="0.55" stop-color="#e4cc9c"/>
   <stop offset="0.85" stop-color="#d0b088"/>
   <stop offset="1" stop-color="#c49a7a"/>
  </linearGradient>
  <linearGradient id="rimH" gradientUnits="userSpaceOnUse" x1="221" x2="443" y1="0" y2="0">
   <stop offset="0" stop-color="#6a4020" stop-opacity="0.2"/>
   <stop offset="0.3" stop-color="#6a4020" stop-opacity="0"/>
   <stop offset="0.65" stop-color="#6a4020" stop-opacity="0"/>
   <stop offset="1" stop-color="#6a4020" stop-opacity="0.25"/>
  </linearGradient>
  <linearGradient id="coffeeG" gradientUnits="userSpaceOnUse" x1="229" x2="436" y1="0" y2="0">
   <stop offset="0" stop-color="#382212"/>
   <stop offset="0.22" stop-color="#4c321e"/>
   <stop offset="0.5" stop-color="#6a4a2e"/>
   <stop offset="0.78" stop-color="#4c321e"/>
   <stop offset="1" stop-color="#382212"/>
  </linearGradient>
  <linearGradient id="coffeeV" gradientUnits="userSpaceOnUse" x1="0" x2="0" y1="158" y2="206">
   <stop offset="0" stop-color="#2a1808" stop-opacity="0.35"/>
   <stop offset="0.35" stop-color="#2a1808" stop-opacity="0"/>
   <stop offset="1" stop-color="#2a1808" stop-opacity="0"/>
  </linearGradient>
  <radialGradient id="leafG" gradientUnits="userSpaceOnUse" cx="530" cy="180" r="100">
   <stop offset="0" stop-color="#b0182a"/>
   <stop offset="0.6" stop-color="#a41426"/>
   <stop offset="1" stop-color="#921022"/>
  </radialGradient>
  <radialGradient id="leafG2" gradientUnits="userSpaceOnUse" cx="335" cy="270" r="105">
   <stop offset="0" stop-color="#b0182a"/>
   <stop offset="0.6" stop-color="#a41426"/>
   <stop offset="1" stop-color="#921022"/>
  </radialGradient>
  <radialGradient id="sq1" cx="0.5" cy="0.5" r="0.6">
   <stop offset="0" stop-color="#b41c30"/>
   <stop offset="1" stop-color="#8c1022"/>
  </radialGradient>
  <radialGradient id="sq2" cx="0.5" cy="0.5" r="0.6">
   <stop offset="0" stop-color="#6e4c30"/>
   <stop offset="1" stop-color="#3a2414"/>
  </radialGradient>
  <linearGradient id="sq3" x1="0" x2="1" y1="0" y2="0">
   <stop offset="0" stop-color="#c49c6c"/>
   <stop offset="0.5" stop-color="#f2daa2"/>
   <stop offset="1" stop-color="#c49c6c"/>
  </linearGradient>
 </defs>

 <!-- canvas items -->
 <rect x="33" y="86.5" width="213" height="15.5" fill="#eef3fb" filter="url(#bl)"/>
 <filter id="bl" x="-50%" y="-50%" width="200%" height="200%"><feGaussianBlur stdDeviation="1.1"/></filter><circle cx="50.4" cy="96" r="9.6" fill="none" stroke="#e6a0b6" stroke-width="4.2" filter="url(#bl)" opacity="0.88"/>
 <text x="212" y="98" font-size="7" fill="#e2e6ee" font-family="Liberation Sans">Ctrl</text>
 <rect x="35.2" y="135.5" width="47.2" height="49.3" fill="url(#sq1)"/>
 <rect x="35" y="197.2" width="51" height="36.8" fill="url(#sq2)"/>
 <rect x="35" y="246" width="51" height="39" fill="url(#sq3)"/>
 <rect x="35" y="302" width="51" height="46.4" fill="#a87c55"/>
 <path d="M91,124.5 L91,135.5 L93.6,133.1 L95.6,137.5 L97.2,136.7 L95.3,132.5 L98.8,132.3 Z" fill="#111" stroke="#fff" stroke-width="0.5"/>
 <!-- saucer -->
 <ellipse cx="332.3" cy="347.2" rx="191.6" ry="55.5" fill="#961222"/>
 <ellipse cx="332.3" cy="346.2" rx="186.6" ry="50" fill="url(#saucerG)"/>
 <ellipse cx="332.3" cy="346.2" rx="183" ry="47.2" fill="none" stroke="#f0d0a8" stroke-width="4" opacity="0.25"/>
 <ellipse cx="332.3" cy="346.2" rx="186.6" ry="50" fill="none" stroke="#d89880" stroke-width="0.8" opacity="0.6"/>
 <ellipse cx="332.2" cy="346.2" rx="178.5" ry="44.5" fill="none" stroke="#86603c" stroke-width="0.9"/>
 <!-- cup body -->
 <path d="M218.7,174.8 L218.7,220.7 A113.5,123.5 0 0 0 445.7,220.7 L445.7,174.8 Z" fill="url(#cupG)"/>
 <path d="M293.4,330 L293.4,342 Q294,346 299,346.5 Q332,349 365.5,346.5 Q370.5,346 371,342 L371,330 Z" fill="url(#cupG2)"/>
 <!-- rim -->
 <ellipse cx="332.2" cy="174.8" rx="113.6" ry="35.6" fill="url(#rimO)"/>
 <ellipse cx="332.2" cy="175.1" rx="110.2" ry="31.4" fill="url(#rimG)"/>
 <ellipse cx="332.2" cy="175.1" rx="110.2" ry="31.4" fill="url(#rimH)"/>
 <ellipse cx="332.2" cy="181.7" rx="103.5" ry="23.9" fill="url(#coffeeG)"/>
 <ellipse cx="332.2" cy="181.7" rx="103.5" ry="23.9" fill="url(#coffeeV)"/>
 <!-- right leaf -->
 <path d="M464.5,280.5 L488.4,186 C500,175 525,141 545,139.8 C558,139.8 568.4,160 568.4,195 C568.4,235 525,266 464.5,280.5 Z" fill="url(#leafG)"/>
 <!-- left leaf -->
 <path d="M265,377 L287,283.3 C297,268 318,238 342,235 C360,234 369,255 368.8,283.3 C369,342 325,356 265,377 Z" fill="url(#leafG2)"/>

 <!-- selection -->
 <g stroke="#9a70c4" fill="none" stroke-width="0.8" opacity="0.9">
  <rect x="264.5" y="234.5" width="105" height="143"/>
 </g>
 <path d="M265,377 L287,283.3 C297,268 318,238 342,235 C360,234 369,255 368.8,283.3 C369,342 325,356 265,377 Z" fill="none" stroke="#a07ccc" stroke-width="0.7" opacity="0.85"/>
 <g fill="#fbf6fb" stroke="#9a88d0" stroke-width="0.6">
  <rect x="262.8" y="232.8" width="3.4" height="3.4"/><rect x="315.2" y="232.8" width="3.4" height="3.4"/><rect x="368" y="232.8" width="3.4" height="3.4"/>
  <rect x="262.8" y="304.3" width="3.4" height="3.4"/><rect x="368" y="304.3" width="3.4" height="3.4"/>
  <rect x="262.8" y="375.7" width="3.4" height="3.4"/><rect x="315.2" y="375.7" width="3.4" height="3.4"/><rect x="368" y="375.7" width="3.4" height="3.4"/>
 </g>
 <g fill="#9a88dd">
  <circle cx="287" cy="283.3" r="1.8"/><circle cx="368.8" cy="283.3" r="1.8"/>
 </g>
</svg>
</div></body></html>
